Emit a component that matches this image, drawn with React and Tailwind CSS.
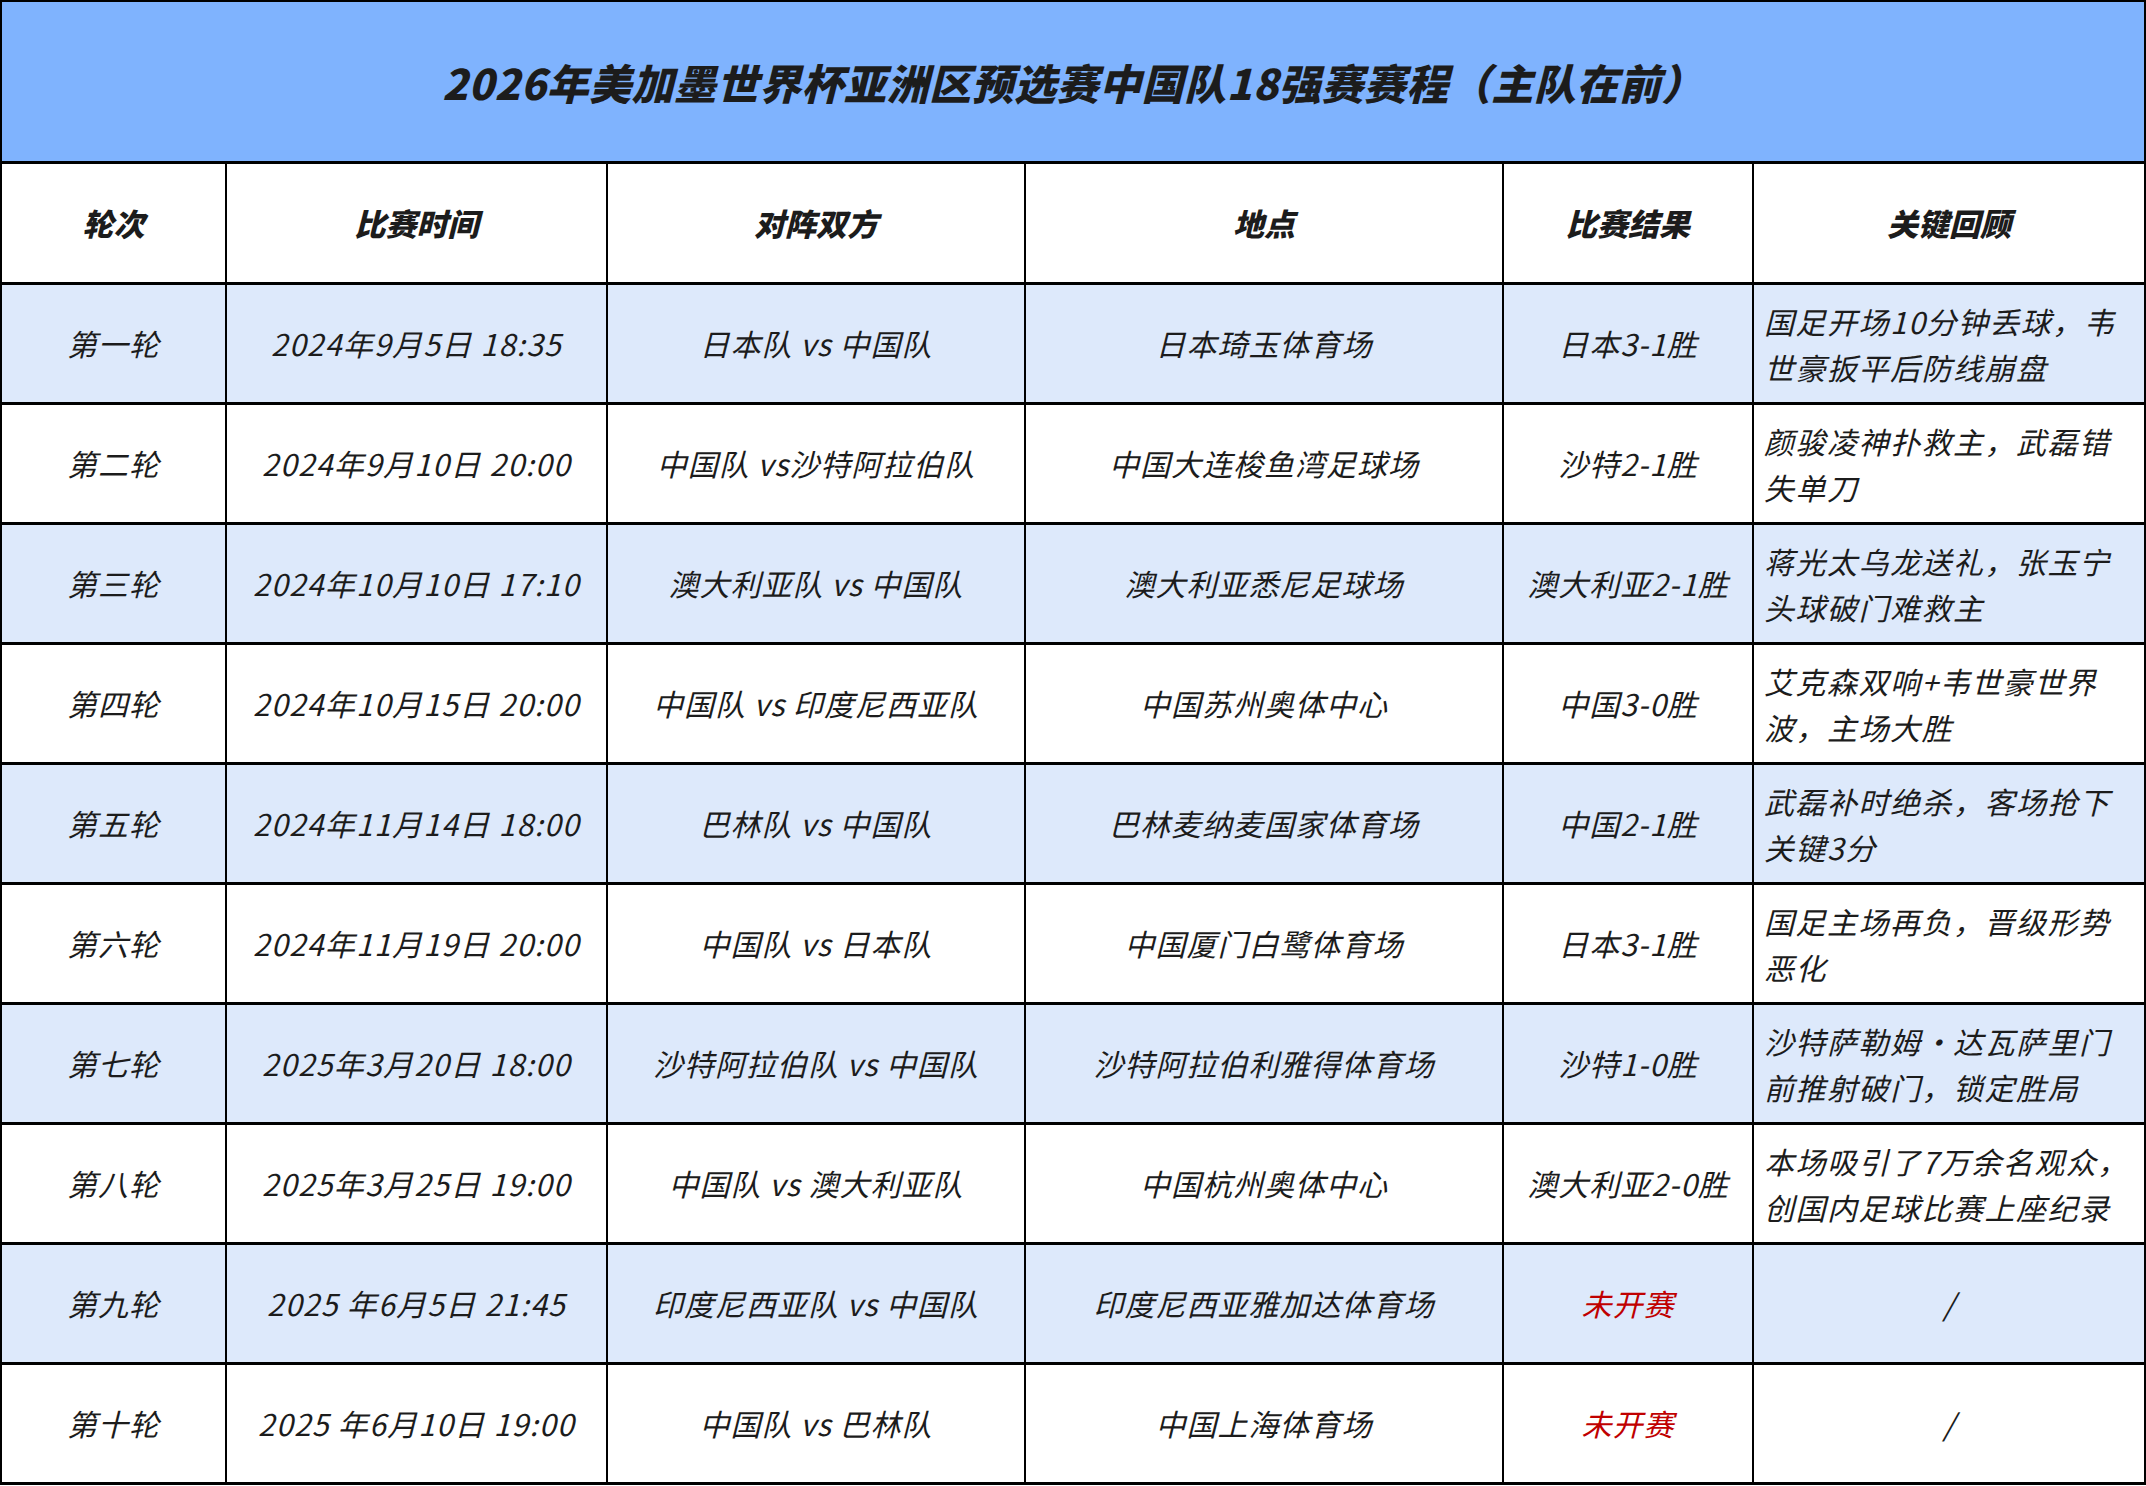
const rows = [
  ['第一轮', '2024年9月5日 18:35', '日本队 vs 中国队', '日本琦玉体育场', '日本3-1胜', ['国足开场10分钟丢球，韦', '世豪扳平后防线崩盘']],
  ['第二轮', '2024年9月10日 20:00', '中国队 vs沙特阿拉伯队', '中国大连梭鱼湾足球场', '沙特2-1胜', ['颜骏凌神扑救主，武磊错', '失单刀']],
  ['第三轮', '2024年10月10日 17:10', '澳大利亚队 vs 中国队', '澳大利亚悉尼足球场', '澳大利亚2-1胜', ['蒋光太乌龙送礼，张玉宁', '头球破门难救主']],
  ['第四轮', '2024年10月15日 20:00', '中国队 vs 印度尼西亚队', '中国苏州奥体中心', '中国3-0胜', ['艾克森双响+韦世豪世界', '波，主场大胜']],
  ['第五轮', '2024年11月14日 18:00', '巴林队 vs 中国队', '巴林麦纳麦国家体育场', '中国2-1胜', ['武磊补时绝杀，客场抢下', '关键3分']],
  ['第六轮', '2024年11月19日 20:00', '中国队 vs 日本队', '中国厦门白鹭体育场', '日本3-1胜', ['国足主场再负，晋级形势', '恶化']],
  ['第七轮', '2025年3月20日 18:00', '沙特阿拉伯队 vs 中国队', '沙特阿拉伯利雅得体育场', '沙特1-0胜', ['沙特萨勒姆・达瓦萨里门', '前推射破门，锁定胜局']],
  ['第八轮', '2025年3月25日 19:00', '中国队 vs 澳大利亚队', '中国杭州奥体中心', '澳大利亚2-0胜', ['本场吸引了7万余名观众，', '创国内足球比赛上座纪录']],
  ['第九轮', '2025 年6月5日 21:45', '印度尼西亚队 vs 中国队', '印度尼西亚雅加达体育场', null, null],
  ['第十轮', '2025 年6月10日 19:00', '中国队 vs 巴林队', '中国上海体育场', null, null],
];

const headers = ['轮次', '比赛时间', '对阵双方', '地点', '比赛结果', '关键回顾'];

const cell = 'flex items-center justify-center border-b-[3px] border-black text-center';

export default function App() {
  return (
    <div
      className="w-[2146px] bg-white text-[#1c1c1c] italic"
      style={{ fontFamily: '"Noto Sans CJK SC", "Noto Sans", sans-serif' }}
    >
      <div className="border-x-2 border-t-2 border-black">
        {/* title */}
        <div className="h-[162px] flex items-center justify-center bg-[#7fb3fe] border-b-[3px] border-black">
          <h1 className="text-[42px] font-black tracking-[0.5px]">
            2026年美加墨世界杯亚洲区预选赛中国队18强赛赛程（主队在前）
          </h1>
        </div>

        <div className="grid grid-cols-[225px_381px_418px_478px_250px_1fr]">
          {headers.map((h, i) => (
            <div
              key={h}
              className={`${cell} h-[121px] text-[31px] font-black ${i < 5 ? 'border-r-2' : ''}`}
            >
              {h}
            </div>
          ))}

          {rows.map((r, idx) => {
            const bg = idx % 2 === 0 ? 'bg-[#dde9fb]' : 'bg-white';
            return [
              <div key={`${idx}a`} className={`${cell} ${bg} h-[120px] border-r-2 text-[30px] tracking-[1px]`}>{r[0]}</div>,
              <div key={`${idx}b`} className={`${cell} ${bg} h-[120px] border-r-2 text-[30px] tracking-[1.3px]`}>{r[1]}</div>,
              <div key={`${idx}c`} className={`${cell} ${bg} h-[120px] border-r-2 text-[30px] tracking-[1px]`}>{r[2]}</div>,
              <div key={`${idx}d`} className={`${cell} ${bg} h-[120px] border-r-2 text-[30px] tracking-[1px]`}>{r[3]}</div>,
              <div key={`${idx}e`} className={`${cell} ${bg} h-[120px] border-r-2 text-[30px] tracking-[1px]`}>
                {r[4] ? r[4] : <span className="text-[#c00000]">未开赛</span>}
              </div>,
              r[5] ? (
                <div
                  key={`${idx}f`}
                  className={`flex flex-col justify-center border-b-[3px] border-black ${bg} h-[120px] pl-[10px] text-[30px] leading-[46px] tracking-[1.5px] whitespace-nowrap`}
                >
                  <span>{r[5][0]}</span>
                  <span>{r[5][1]}</span>
                </div>
              ) : (
                <div key={`${idx}f`} className={`${cell} ${bg} h-[120px] text-[30px]`}>/</div>
              ),
            ];
          })}
        </div>
      </div>
    </div>
  );
}
